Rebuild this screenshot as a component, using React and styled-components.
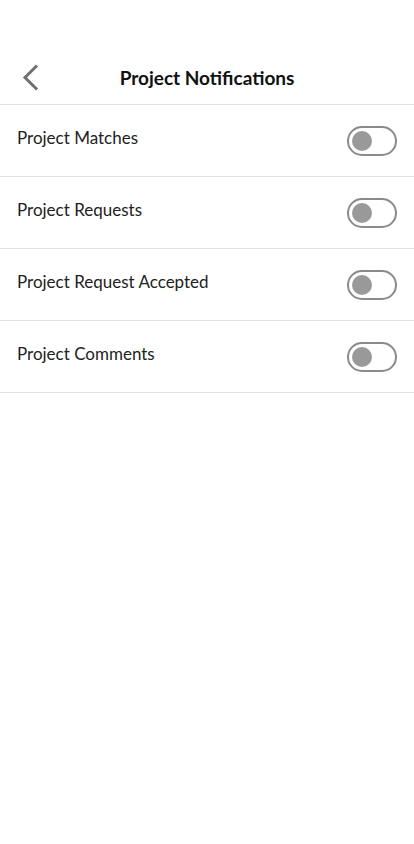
import React, { useState } from "react";
import styled, { createGlobalStyle } from "styled-components";

const GlobalStyle = createGlobalStyle`
  body {
    margin: 0;
    background: #ffffff;
    font-family: "Lato", "Open Sans", sans-serif;
  }
`;

const items = [
  "Project Matches",
  "Project Requests",
  "Project Request Accepted",
  "Project Comments",
];

function Toggle({ on, onClick }) {
  return (
    <Switch onClick={onClick} $on={on}>
      <Knob $on={on} />
    </Switch>
  );
}

export default function App() {
  const [state, setState] = useState(items.map(() => false));
  const flip = (i) => setState(state.map((v, j) => (j === i ? !v : v)));

  return (
    <>
      <GlobalStyle />
      <Page>
        <Header>
          <Back>
            <svg width="20" height="28" viewBox="0 0 20 28">
              <path
                d="M16 2.5 L5 13.5 L16 24.5"
                fill="none"
                stroke="#6f6f6f"
                strokeWidth="3"
                strokeLinecap="square"
                strokeLinejoin="miter"
              />
            </svg>
          </Back>
          <Title>Project Notifications</Title>
        </Header>
        <List>
          {items.map((label, i) => (
            <Row key={label}>
              <Label>{label}</Label>
              <Toggle on={state[i]} onClick={() => flip(i)} />
            </Row>
          ))}
        </List>
      </Page>
    </>
  );
}

const Page = styled.div`
  padding-top: 52px;
  min-height: 844px;
  box-sizing: border-box;
`;

const Header = styled.div`
  position: relative;
  height: 52px;
  display: flex;
  align-items: center;
  justify-content: center;
  border-bottom: 1px solid #e2e2e2;
`;

const Back = styled.div`
  position: absolute;
  left: 20px;
  top: 12px;
  display: flex;
`;

const Title = styled.div`
  font-size: 19px;
  font-weight: 700;
  color: #111;
  margin-top: -1px;
`;

const List = styled.div`
  display: flex;
  flex-direction: column;
`;

const Row = styled.div`
  height: 71px;
  display: flex;
  align-items: center;
  justify-content: space-between;
  padding: 0 17px;
  border-bottom: 1px solid #e2e2e2;
`;

const Label = styled.div`
  font-size: 17px;
  color: #222;
  margin-top: -6px;
`;

const Switch = styled.div`
  width: 50px;
  height: 30px;
  box-sizing: border-box;
  border: 2px solid #8a8a8a;
  border-radius: 15px;
  position: relative;
  cursor: pointer;
  background: ${({ $on }) => ($on ? "#e8e8e8" : "#fff")};
`;

const Knob = styled.div`
  position: absolute;
  top: 3px;
  left: ${({ $on }) => ($on ? "24px" : "3px")};
  width: 20px;
  height: 20px;
  border-radius: 50%;
  background: #999999;
`;
